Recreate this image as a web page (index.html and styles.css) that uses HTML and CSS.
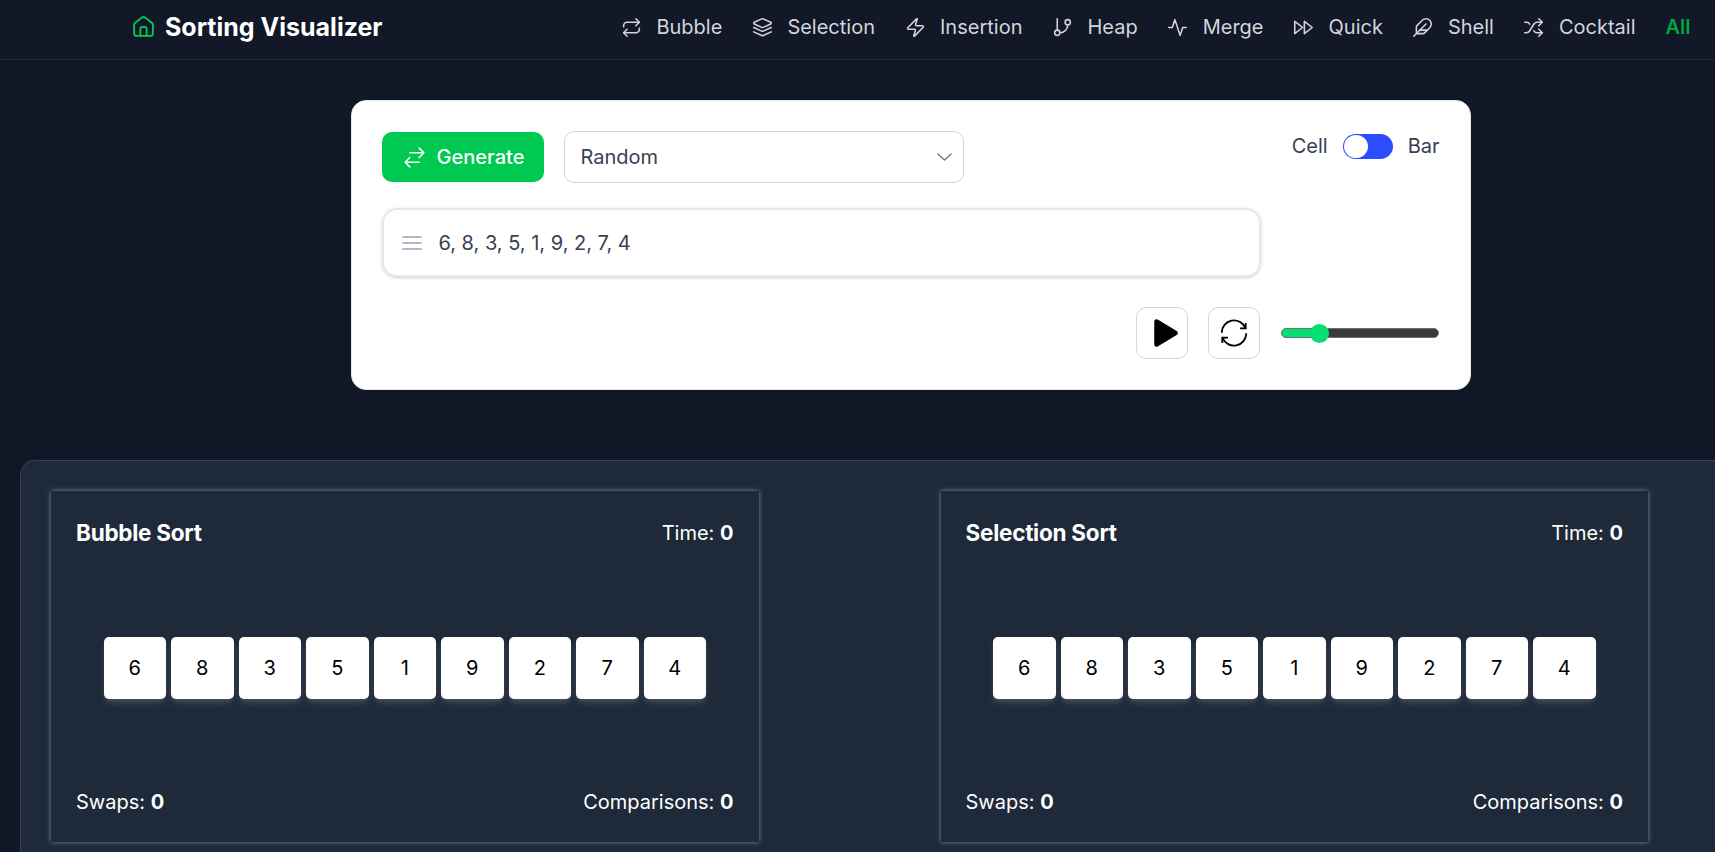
FILE: index.html
```html
<!DOCTYPE html>
<html lang="en">
<head>
<meta charset="utf-8">
<title>Sorting Visualizer</title>
<link rel="stylesheet" href="styles.css">
</head>
<body>
<header class="header">
  <a class="brand">
    <svg class="brand-icon" viewBox="0 0 24 24"><path d="M3 10.2a2 2 0 0 1 .8-1.6l7-5.4a2 2 0 0 1 2.4 0l7 5.4a2 2 0 0 1 .8 1.6V19a2 2 0 0 1-2 2H5a2 2 0 0 1-2-2z"/><path d="M9 21v-7a1.500 1.500 0 0 1 1.500-1.500h3A1.500 1.500 0 0 1 15 14v7"/></svg>
    <span>Sorting Visualizer</span>
  </a>
  <nav class="nav">
    <a class="nav-item"><svg class="icon" viewBox="0 0 24 24"><path d="m17 2 4 4-4 4"/><path d="M3 11v-1a4 4 0 0 1 4-4h14"/><path d="m7 22-4-4 4-4"/><path d="M21 13v1a4 4 0 0 1-4 4H3"/></svg>Bubble</a>
    <a class="nav-item"><svg class="icon" viewBox="0 0 24 24"><path d="m12.830 2.180a2 2 0 0 0-1.660 0L2.600 6.080a1 1 0 0 0 0 1.830l8.580 3.910a2 2 0 0 0 1.660 0l8.580-3.900a1 1 0 0 0 0-1.830Z"/><path d="m22 12-9.170 4.160a2 2 0 0 1-1.660 0L2 12"/><path d="m22 17-9.170 4.160a2 2 0 0 1-1.660 0L2 17"/></svg>Selection</a>
    <a class="nav-item"><svg class="icon" viewBox="0 0 24 24"><path d="M4 14a1 1 0 0 1-.78-1.630l9.900-10.200a.5.5 0 0 1 .86.460l-1.920 6.020A1 1 0 0 0 13 10h7a1 1 0 0 1 .78 1.630l-9.900 10.200a.5.5 0 0 1-.86-.46l1.920-6.020A1 1 0 0 0 11 14z"/></svg>Insertion</a>
    <a class="nav-item"><svg class="icon" viewBox="0 0 24 24"><path d="M6 2v13"/><circle cx="18" cy="6" r="3"/><circle cx="6" cy="18" r="3"/><path d="M18 9a9 9 0 0 1-9 9"/></svg>Heap</a>
    <a class="nav-item"><svg class="icon" viewBox="0 0 24 24"><path d="M22 12h-4l-3 9L9 3l-3 9H2"/></svg>Merge</a>
    <a class="nav-item"><svg class="icon" viewBox="0 0 24 24"><path d="m13 19 9-7-9-7z"/><path d="m2 19 9-7-9-7z"/></svg>Quick</a>
    <a class="nav-item"><svg class="icon" viewBox="0 0 24 24"><path d="M12.670 19a2 2 0 0 0 1.416-.588l6.154-6.172a6 6 0 0 0-8.490-8.490L5.586 9.914A2 2 0 0 0 5 11.328V18a1 1 0 0 0 1 1z"/><path d="M16 8 2 22"/><path d="M17.500 15H9"/></svg>Shell</a>
    <a class="nav-item"><svg class="icon" viewBox="0 0 24 24"><path d="m18 14 4 4-4 4"/><path d="m18 2 4 4-4 4"/><path d="M2 18h1.973a4 4 0 0 0 3.300-1.700l5.454-8.600a4 4 0 0 1 3.300-1.700H22"/><path d="M2 6h1.972a4 4 0 0 1 3.600 2.200"/><path d="M22 18h-6.041a4 4 0 0 1-3.300-1.800l-.359-.45"/></svg>Cocktail</a>
    <a class="nav-item nav-active">All</a>
  </nav>
</header>

<section class="controls">
  <div class="row row-top">
    <button class="generate">
      <svg viewBox="0 0 24 24"><path d="M7.500 21 3 16.500m0 0L7.500 12M3 16.500h13.500m0-13.500L21 7.500m0 0L16.500 12M21 7.500H7.500"/></svg>
      <span>Generate</span>
    </button>
    <div class="select"><span>Random</span><svg viewBox="0 0 16 8"><path d="m1 .8 7 6.400 7-6.400"/></svg></div>
    <div class="view">
      <span>Cell</span><span class="toggle"><span class="knob"></span></span><span>Bar</span>
    </div>
  </div>
  <div class="array">
    <svg viewBox="0 0 20 14"><path d="M.7 1h18.600M.7 7h18.600M.7 13h18.600"/></svg>
    <span>6, 8, 3, 5, 1, 9, 2, 7, 4</span>
  </div>
  <div class="row row-play">
    <button class="square"><svg class="play" viewBox="0 0 24 28"><path d="M2.500 2.500v23L21.500 14z"/></svg></button>
    <button class="square"><svg class="reload" viewBox="0 0 28 28"><path d="M1.800 13.800A12.200 12.200 0 0 1 25.400 9.200M25.700 4v5.400h-5.700M26.200 14.200A12.200 12.200 0 0 1 2.600 18.800M2.300 24v-5.400h5.700"/></svg></button>
    <div class="slider"><div class="slider-fill"></div><div class="slider-thumb"></div></div>
  </div>
</section>

<main class="panel">
  <article class="sort">
    <div class="line"><h2>Bubble Sort</h2><p>Time: <b>0</b></p></div>
    <div class="cells"><span>6</span><span>8</span><span>3</span><span>5</span><span>1</span><span>9</span><span>2</span><span>7</span><span>4</span></div>
    <div class="line"><p>Swaps: <b>0</b></p><p>Comparisons: <b>0</b></p></div>
  </article>
  <article class="sort">
    <div class="line"><h2>Selection Sort</h2><p>Time: <b>0</b></p></div>
    <div class="cells"><span>6</span><span>8</span><span>3</span><span>5</span><span>1</span><span>9</span><span>2</span><span>7</span><span>4</span></div>
    <div class="line"><p>Swaps: <b>0</b></p><p>Comparisons: <b>0</b></p></div>
  </article>
</main>
</body>
</html>
```
FILE: styles.css
```css
* { box-sizing: border-box; }
html, body { height: 100%; }
body {
  margin: 0;
  overflow: hidden;
  background: #101726;
  color: #fff;
  font-family: Inter, "Liberation Sans", sans-serif;
  font-size: 20px;
  line-height: 30px;
}
svg { display: block; flex: none; fill: none; stroke: currentColor; stroke-linecap: round; stroke-linejoin: round; }
h2, p { margin: 0; }
button { padding: 0; font: inherit; }

.header {
  display: flex;
  justify-content: space-between;
  height: 60px;
  padding: 0 24.500px 6px 131px;
  background: #121827;
  border-bottom: 1px solid #1e2939;
}
.brand { display: flex; align-items: center; gap: 9px; font-size: 25px; font-weight: 700; letter-spacing: 0; }
.brand-icon { width: 25px; height: 25px; color: #00c951; stroke-width: 1.800; }
.nav { display: flex; align-items: center; gap: 29.500px; color: #d1d5dc; white-space: nowrap; }
.nav-item { display: flex; align-items: center; gap: 14.500px; }
.icon { width: 21px; height: 21px; margin-top: 1px; stroke-width: 1.800; }
.nav-active { margin-left: .500px; color: #00a63e; font-weight: 600; }

.controls {
  width: 1120px;
  height: 290px;
  margin: 40px 0 0 351px;
  padding: 30px;
  background: #fff;
  border: 1px solid #e5e7eb;
  border-radius: 15px;
  color: #364153;
}
.row { display: flex; align-items: center; gap: 20px; }
.row-top { height: 52px; }
.generate {
  display: flex;
  align-items: center;
  justify-content: center;
  gap: 10px;
  width: 162px;
  height: 50px;
  border: 0;
  border-radius: 10px;
  background: #00c951;
  color: #fff;
  font-weight: 500;
}
.generate svg { width: 25px; height: 25px; stroke-width: 1.500; }
.select {
  display: flex;
  align-items: center;
  justify-content: space-between;
  width: 400px;
  height: 52px;
  padding: 0 11.500px 0 15.500px;
  border: 1px solid #d1d5dc;
  border-radius: 10px;
}
.select svg { width: 15px; height: 8px; color: #6a7282; stroke-width: 1.400; }
.view { display: flex; align-items: center; gap: 15px; margin-left: auto; height: 52px; padding: 0 .500px 22px 0; }
.toggle { display: flex; width: 50px; height: 25px; padding: 1px; border-radius: 13px; background: #2b4dff; }
.knob { width: 24px; height: 23px; border-radius: 50%; background: #fff; }

.array {
  display: flex;
  align-items: center;
  gap: 17px;
  width: 879px;
  height: 69px;
  margin-top: 25px;
  padding-left: 17.500px;
  border: 2px solid #e5e7eb;
  border-radius: 15px;
  box-shadow: 0 1px 4px rgba(0, 0, 0, .1), 0 1px 2px rgba(0, 0, 0, .1);
}
.array svg { width: 20px; height: 14px; color: #99a1af; stroke-width: 1.500; }

.row-play { justify-content: flex-end; margin-top: 30px; padding-right: 1px; }
.square {
  display: flex;
  align-items: center;
  justify-content: center;
  width: 52px;
  height: 52px;
  border: 1px solid #d1d5dc;
  border-radius: 10px;
  background: #fff;
  color: #000;
}
.play { width: 24px; height: 28px; margin-left: 7px; fill: #000; stroke-width: 4.500; }
.reload { width: 28px; height: 28px; stroke-width: 1.800; stroke-linecap: butt; stroke-linejoin: miter; }
.slider { position: relative; width: 158px; height: 10px; margin-left: 1px; border: 1px solid #6f6f6f; border-radius: 5px; background: #3b3b3b; }
.slider-fill { width: 38px; height: 8px; border-radius: 4px 0 0 4px; background: #05df72; }
.slider-thumb { position: absolute; left: 27.500px; top: -5.500px; width: 19px; height: 19px; border-radius: 50%; background: #05df72; }

.panel {
  display: grid;
  grid-template-columns: 707.500px 707.500px;
  column-gap: 182px;
  height: 392px;
  margin: 70px 0 0 20px;
  padding: 30px 30px 0;
  background: #1e2939;
  border: 1px solid #364153;
  border-width: 1px 0 0 1px;
  border-radius: 15px 0 0 0;
}
.sort {
  display: flex;
  flex-direction: column;
  justify-content: space-between;
  height: 351px;
  padding: 27px 25px 25px;
  box-shadow: 0 0 5px rgba(255, 255, 255, .45);
  background: #1e2939;
}
.line { display: flex; align-items: center; justify-content: space-between; }
.line h2 { font-size: 22.500px; line-height: 30px; font-weight: 700; letter-spacing: -0.250px; }
.cells { display: flex; justify-content: center; gap: 5px; }
.cells span {
  display: flex;
  align-items: center;
  justify-content: center;
  width: 62.500px;
  height: 62px;
  border-radius: 5px;
  background: #fff;
  color: #000;
  box-shadow: 0 5px 7px -1px rgba(255, 255, 255, .14), 0 2px 5px -2px rgba(255, 255, 255, .14);
}
```
